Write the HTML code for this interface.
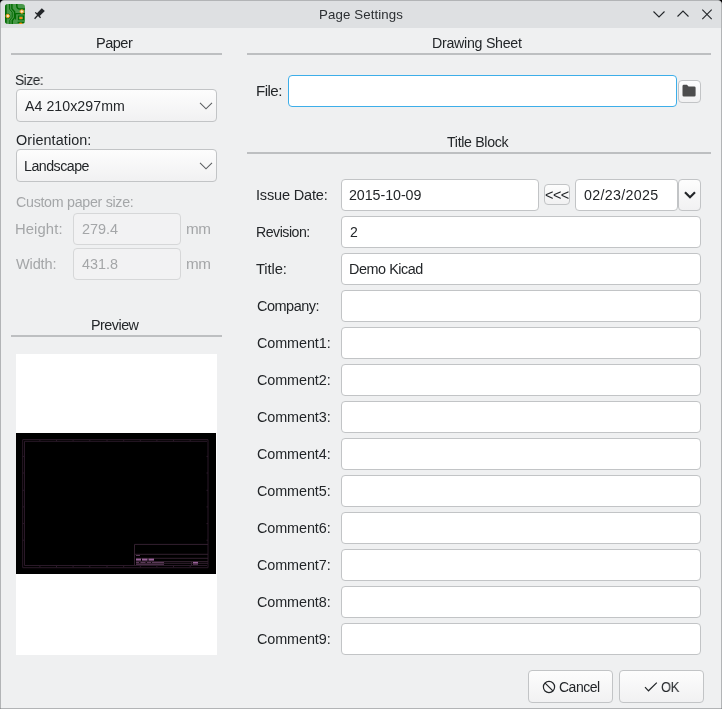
<!DOCTYPE html>
<html><head><meta charset="utf-8"><title>Page Settings</title><style>
*{margin:0;padding:0;box-sizing:border-box}
html,body{width:722px;height:709px;overflow:hidden;background:#000}
body{position:relative;font-family:"Liberation Sans",sans-serif;font-size:14px;color:#232629}
.win{position:absolute;left:0;top:0;width:722px;height:709px;background:#eff0f1;border:1px solid #b2b4b6;border-radius:4px 4px 0 0;overflow:hidden}
.tb{position:absolute;left:0;top:0;width:720px;height:27px;background:#dee0e2}
.t{position:absolute;white-space:nowrap;line-height:16px;font-size:14px;will-change:transform}
.sep{position:absolute;height:2px;background:#bdbfc1}
.fld{position:absolute;background:#fff;border:1px solid #c2c4c6;border-radius:4px}
.dis{position:absolute;background:#f2f2f3;border:1px solid #d6d7d8;border-radius:4px}
.btn{position:absolute;background:linear-gradient(#fdfdfd,#f1f1f2);border:1px solid #c2c4c6;border-radius:4px}
.focus{position:absolute;background:#fff;border:1px solid #3daee9;border-radius:4px}
svg{position:absolute;overflow:visible}
</style></head><body>
<div class="win">
<div class="tb"></div>
</div>
<svg style="left:5px;top:4px" width="20" height="20" viewBox="0 0 20 20">
<defs><clipPath id="ic"><rect x="0" y="0" width="20" height="20" rx="3.2"/></clipPath></defs>
<g clip-path="url(#ic)">
<rect x="0" y="0" width="20" height="20" fill="#499849"/>
<g fill="none" stroke="#036c03">
<path d="M0.8 0V20" stroke-width="1.8"/>
<path d="M4.6 0V5.2L7.2 8.2V13.2L4.8 16.2V20" stroke-width="1.0"/>
<path d="M6.9 0V4.8L9.6 7.8V13.6L7.3 16.6V20" stroke-width="1.4"/>
<path d="M11.8 0V1.8Q11.8 5.1 15.2 5.1H20" stroke-width="1.5"/>
<path d="M10.3 9.6H20" stroke-width="1.3"/>
<path d="M10.6 9.6V15.5" stroke-width="1.1"/>
<path d="M13.4 12H18.6V15.7H13.4Z" stroke-width="1.1"/>
<path d="M12.6 18.3H19.2" stroke-width="1.3"/>
</g>
<circle cx="2.8" cy="12" r="2.6" fill="#036c03"/>
<circle cx="16.8" cy="7.5" r="1.75" fill="#ffe6bd" stroke="#f0981c" stroke-width="1"/>
<circle cx="2.75" cy="12" r="1.75" fill="#ffe6bd" stroke="#f0981c" stroke-width="1"/>
<ellipse cx="16" cy="13.9" rx="1.6" ry="1.25" fill="#f48f16"/>
<ellipse cx="15.8" cy="19.6" rx="1.6" ry="1.2" fill="#f48f16"/>
</g>
</svg>
<svg style="left:30px;top:4px" width="20" height="20" viewBox="0 0 20 20">
<polygon points="11.8,4.2 14.8,7 9.5,12.3 6.7,9.4" fill="#232629"/>
<path d="M5.3 8.4L10.6 13.7M8 11L4.6 14.8" stroke="#232629" stroke-width="1.3" fill="none"/>
</svg>
<svg style="left:650px;top:6px" width="70" height="16" viewBox="0 0 70 16">
<g fill="none" stroke="#232629" stroke-width="1.1">
<path d="M3.5 5.5L9 11L14.5 5.5"/>
<path d="M27.5 10.5L33 5L38.5 10.5"/>
<path d="M52.3 3.7L61.7 13.1M61.7 3.7L52.3 13.1"/>
</g></svg>
<div class="t" style="left:319.00px;top:7.00px;letter-spacing:0.11px;transform:scaleX(1.020);transform-origin:0.00px 0;color:#2c2f32;font-size:13px;">Page Settings</div>
<div class="sep" style="left:11px;top:53px;width:211px;height:2px;"></div>
<div class="t" style="left:96.00px;top:35.00px;letter-spacing:-0.50px;transform:scaleX(1.040);transform-origin:0.00px 0;">Paper</div>
<div class="t" style="left:15.00px;top:72.00px;letter-spacing:-0.50px;transform:scaleX(0.981);transform-origin:0.00px 0;">Size:</div>
<div class="btn" style="left:16px;top:89px;width:201px;height:33px;"></div>
<div class="t" style="left:25.00px;top:98.00px;letter-spacing:0.05px;transform:scaleX(1.012);transform-origin:0.00px 0;">A4 210x297mm</div>
<div class="t" style="left:16.00px;top:132.00px;letter-spacing:0.09px;transform:scaleX(1.027);transform-origin:0.00px 0;">Orientation:</div>
<div class="btn" style="left:16px;top:149px;width:201px;height:33px;"></div>
<div class="t" style="left:24.00px;top:158.00px;letter-spacing:-0.50px;transform:scaleX(1.016);transform-origin:0.00px 0;">Landscape</div>
<svg style="left:199px;top:102px" width="14" height="8" viewBox="0 0 14 8"><path d="M1 0.8L7 6.8L13 0.8" fill="none" stroke="#5b5e61" stroke-width="1.1"/></svg>
<svg style="left:199px;top:162px" width="14" height="8" viewBox="0 0 14 8"><path d="M1 0.8L7 6.8L13 0.8" fill="none" stroke="#5b5e61" stroke-width="1.1"/></svg>
<div class="t" style="left:16.00px;top:194.00px;letter-spacing:-0.29px;transform:scaleX(1.018);transform-origin:0.00px 0;color:#a4a6a8;">Custom paper size:</div>
<div class="t" style="left:15.00px;top:221.00px;letter-spacing:0.09px;transform:scaleX(1.058);transform-origin:0.00px 0;color:#a4a6a8;">Height:</div>
<div class="dis" style="left:73px;top:213px;width:108px;height:32px;"></div>
<div class="t" style="left:82.00px;top:221.00px;letter-spacing:-0.03px;transform:scaleX(1.032);transform-origin:0.00px 0;color:#a4a6a8;">279.4</div>
<div class="t" style="left:186.00px;top:221.00px;letter-spacing:-0.32px;transform:scaleX(1.089);transform-origin:0.00px 0;color:#a4a6a8;">mm</div>
<div class="t" style="left:16.00px;top:256.00px;letter-spacing:-0.15px;transform:scaleX(1.040);transform-origin:0.00px 0;color:#a4a6a8;">Width:</div>
<div class="dis" style="left:73px;top:248px;width:108px;height:32px;"></div>
<div class="t" style="left:82.00px;top:256.00px;transform:scaleX(1.025);transform-origin:0.00px 0;color:#a4a6a8;">431.8</div>
<div class="t" style="left:186.00px;top:256.00px;letter-spacing:-0.32px;transform:scaleX(1.089);transform-origin:0.00px 0;color:#a4a6a8;">mm</div>
<div class="t" style="left:91.00px;top:317.00px;letter-spacing:-0.50px;transform:scaleX(1.025);transform-origin:0.00px 0;">Preview</div>
<div class="sep" style="left:11px;top:335px;width:211px;height:2px;"></div>
<div class="" style="left:16px;top:354px;width:201px;height:301px;position:absolute;background:#fff"></div>
<svg style="left:16px;top:433px" width="200" height="141" viewBox="0 0 200 141">
<rect x="0" y="0" width="200" height="141" fill="#000"/>
<g fill="none" stroke="#2a1928" stroke-width="1">
<path d="M6.7 134.7V6.6H192V134.7H6.7"/>
<path d="M8.5 132.5V8.3H191M8.5 132.5H191"/>
<path d="M23.9 6.6V8.3M40.5 6.6V8.3M57.1 6.6V8.3M73.8 6.6V8.3M91 6.6V8.3M107.7 6.6V8.3M124.3 6.6V8.3M140.9 6.6V8.3M157.5 6.6V8.3M174.2 6.6V8.3M23.9 132.5V134.7M40.5 132.5V134.7M57.1 132.5V134.7M73.8 132.5V134.7M91 132.5V134.7M107.7 132.5V134.7M124.3 132.5V134.7M140.9 132.5V134.7M157.5 132.5V134.7M174.2 132.5V134.7M6.7 23.4H8.5M190.5 23.4H192M6.7 40H8.5M190.5 40H192M6.7 57.3H8.5M190.5 57.3H192M6.7 73.9H8.5M190.5 73.9H192M6.7 90.6H8.5M190.5 90.6H192M6.7 107.2H8.5M190.5 107.2H192"/>
</g>
<g fill="none" stroke="#33202f" stroke-width="1">
<path d="M118.5 132.5V111.4H192M118.5 121.3H192M120 125.3H192M120 128.6H192M120 130.3H192M175.5 128.6V132.5"/>
</g>
<g fill="#9a629a">
<rect x="120" y="125.6" width="5" height="2"/>
<rect x="126" y="125.6" width="5.5" height="2"/>
<rect x="132.5" y="125.6" width="5.5" height="2"/>
<rect x="177" y="128.9" width="5" height="1.6"/>
</g>
<g fill="#5a3a58">
<rect x="120" y="122" width="4" height="1"/>
<rect x="120" y="129" width="3" height="1"/>
<rect x="124.5" y="129" width="5" height="1"/>
<rect x="131" y="129" width="4" height="1"/>
<rect x="136" y="129" width="12" height="1"/>
<rect x="120" y="130.8" width="28" height="1"/>
<rect x="177" y="130.8" width="5" height="1"/>
</g>
</svg>
<div class="t" style="left:432.00px;top:35.00px;letter-spacing:-0.27px;transform:scaleX(1.015);transform-origin:0.00px 0;">Drawing Sheet</div>
<div class="sep" style="left:247px;top:53px;width:464px;height:2px;"></div>
<div class="t" style="left:256.00px;top:83.00px;letter-spacing:-0.50px;transform:scaleX(1.079);transform-origin:0.00px 0;">File:</div>
<div class="focus" style="left:288px;top:75px;width:389px;height:32px;"></div>
<div class="btn" style="left:678px;top:80px;width:23px;height:23px;"></div>
<svg style="left:682px;top:84px" width="14" height="13" viewBox="0 0 14 13">
<path d="M0.5 2.2Q0.5 0.8 1.9 0.8H4.9L6.6 2.4H12.3Q13.6 2.4 13.6 3.7V11.2Q13.6 12.6 12.3 12.6H1.9Q0.5 12.6 0.5 11.2Z" fill="#4d4d4d"/>
</svg>
<div class="t" style="left:447.00px;top:134.00px;letter-spacing:-0.32px;transform:scaleX(1.012);transform-origin:0.00px 0;">Title Block</div>
<div class="sep" style="left:247px;top:152px;width:464px;height:2px;"></div>
<div class="t" style="left:256.00px;top:187.00px;letter-spacing:-0.18px;transform:scaleX(1.039);transform-origin:0.00px 0;">Issue Date:</div>
<div class="fld" style="left:341px;top:179px;width:198px;height:32px;"></div>
<div class="t" style="left:256.00px;top:224.00px;letter-spacing:-0.50px;transform:scaleX(1.012);transform-origin:0.00px 0;">Revision:</div>
<div class="fld" style="left:341px;top:216px;width:360px;height:32px;"></div>
<div class="t" style="left:256.00px;top:261.00px;letter-spacing:-0.09px;transform:scaleX(1.054);transform-origin:0.00px 0;">Title:</div>
<div class="fld" style="left:341px;top:253px;width:360px;height:32px;"></div>
<div class="t" style="left:257.00px;top:298.00px;letter-spacing:-0.47px;transform:scaleX(1.034);transform-origin:0.00px 0;">Company:</div>
<div class="fld" style="left:341px;top:290px;width:360px;height:32px;"></div>
<div class="t" style="left:257.00px;top:335.00px;letter-spacing:-0.09px;transform:scaleX(1.028);transform-origin:0.00px 0;">Comment1:</div>
<div class="fld" style="left:341px;top:327px;width:360px;height:32px;"></div>
<div class="t" style="left:257.00px;top:372.00px;letter-spacing:-0.09px;transform:scaleX(1.028);transform-origin:0.00px 0;">Comment2:</div>
<div class="fld" style="left:341px;top:364px;width:360px;height:32px;"></div>
<div class="t" style="left:257.00px;top:409.00px;letter-spacing:-0.09px;transform:scaleX(1.028);transform-origin:0.00px 0;">Comment3:</div>
<div class="fld" style="left:341px;top:401px;width:360px;height:32px;"></div>
<div class="t" style="left:257.00px;top:446.00px;letter-spacing:-0.09px;transform:scaleX(1.028);transform-origin:0.00px 0;">Comment4:</div>
<div class="fld" style="left:341px;top:438px;width:360px;height:32px;"></div>
<div class="t" style="left:257.00px;top:483.00px;letter-spacing:-0.09px;transform:scaleX(1.028);transform-origin:0.00px 0;">Comment5:</div>
<div class="fld" style="left:341px;top:475px;width:360px;height:32px;"></div>
<div class="t" style="left:257.00px;top:520.00px;letter-spacing:-0.09px;transform:scaleX(1.028);transform-origin:0.00px 0;">Comment6:</div>
<div class="fld" style="left:341px;top:512px;width:360px;height:32px;"></div>
<div class="t" style="left:257.00px;top:557.00px;letter-spacing:-0.09px;transform:scaleX(1.028);transform-origin:0.00px 0;">Comment7:</div>
<div class="fld" style="left:341px;top:549px;width:360px;height:32px;"></div>
<div class="t" style="left:257.00px;top:594.00px;letter-spacing:-0.09px;transform:scaleX(1.028);transform-origin:0.00px 0;">Comment8:</div>
<div class="fld" style="left:341px;top:586px;width:360px;height:32px;"></div>
<div class="t" style="left:257.00px;top:631.00px;letter-spacing:-0.09px;transform:scaleX(1.028);transform-origin:0.00px 0;">Comment9:</div>
<div class="fld" style="left:341px;top:623px;width:360px;height:32px;"></div>
<div class="t" style="left:349.00px;top:187.00px;letter-spacing:-0.07px;transform:scaleX(1.020);transform-origin:0.00px 0;">2015-10-09</div>
<div class="btn" style="left:544px;top:184px;width:26px;height:21px;"></div>
<div class="t" style="left:545.00px;top:187.00px;letter-spacing:-0.50px;transform:scaleX(1.031);transform-origin:0.00px 0;">&lt;&lt;&lt;</div>
<div class="fld" style="left:575px;top:179px;width:103px;height:32px;"></div>
<div class="t" style="left:584.00px;top:187.00px;letter-spacing:0.32px;transform:scaleX(1.018);transform-origin:0.00px 0;">02/23/2025</div>
<div class="btn" style="left:678px;top:179px;width:23px;height:32px;"></div>
<svg style="left:684px;top:191px" width="12" height="8" viewBox="0 0 12 8"><path d="M1 1.2L6 6.2L11 1.2" fill="none" stroke="#232629" stroke-width="2.2"/></svg>
<div class="t" style="left:350.00px;top:224.00px;">2</div>
<div class="t" style="left:349.00px;top:261.00px;letter-spacing:-0.44px;transform:scaleX(1.028);transform-origin:0.00px 0;">Demo Kicad</div>
<div class="btn" style="left:528px;top:670px;width:85px;height:33px;"></div>
<svg style="left:542px;top:680px" width="14" height="14" viewBox="0 0 14 14"><circle cx="7" cy="7" r="5.6" fill="none" stroke="#232629" stroke-width="1.2"/><path d="M3.1 3.1L10.9 10.9" stroke="#232629" stroke-width="1.2"/></svg>
<div class="t" style="left:559.00px;top:679.00px;letter-spacing:-0.50px;">Cancel</div>
<div class="btn" style="left:619px;top:670px;width:85px;height:33px;"></div>
<svg style="left:644px;top:682px" width="14" height="10" viewBox="0 0 14 10"><path d="M1 5.2L4.5 8.8L12.8 0.6" fill="none" stroke="#232629" stroke-width="1.2"/></svg>
<div class="t" style="left:661.00px;top:679.00px;letter-spacing:-0.50px;transform:scaleX(0.926);transform-origin:0.00px 0;">OK</div>
</body></html>
